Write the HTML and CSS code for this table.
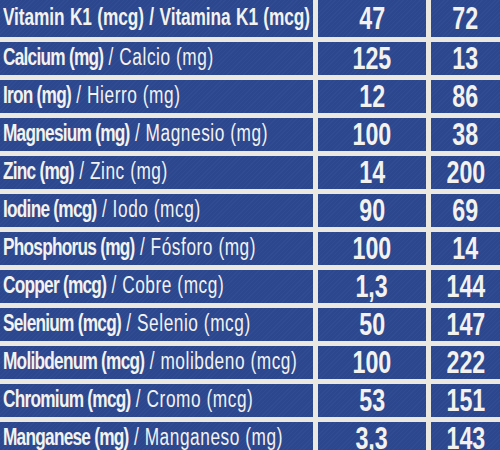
FILE: index.html
```html
<!DOCTYPE html>
<html>
<head>
<meta charset="utf-8">
<link rel="stylesheet" href="styles.css">
</head>
<body>
<div class="label">
  <div class="name"><span class="t t-bold"><b>Vitamin K1 (mcg)</b> / Vitamina K1 (mcg)</span></div><div class="v"><span class="n">47</span></div><div class="v"><span class="n">72</span></div>
  <div class="name"><span class="t"><b>Calcium (mg)</b> / Calcio (mg)</span></div><div class="v"><span class="n">125</span></div><div class="v"><span class="n">13</span></div>
  <div class="name"><span class="t"><b>Iron (mg)</b> / Hierro (mg)</span></div><div class="v"><span class="n">12</span></div><div class="v"><span class="n">86</span></div>
  <div class="name"><span class="t"><b>Magnesium (mg)</b> / Magnesio (mg)</span></div><div class="v"><span class="n">100</span></div><div class="v"><span class="n">38</span></div>
  <div class="name"><span class="t"><b>Zinc (mg)</b> / Zinc (mg)</span></div><div class="v"><span class="n">14</span></div><div class="v"><span class="n">200</span></div>
  <div class="name"><span class="t"><b>Iodine (mcg)</b> / Iodo (mcg)</span></div><div class="v"><span class="n">90</span></div><div class="v"><span class="n">69</span></div>
  <div class="name"><span class="t"><b>Phosphorus (mg)</b> / Fósforo (mg)</span></div><div class="v"><span class="n">100</span></div><div class="v"><span class="n">14</span></div>
  <div class="name"><span class="t"><b>Copper (mcg)</b> / Cobre (mcg)</span></div><div class="v"><span class="n">1,3</span></div><div class="v"><span class="n">144</span></div>
  <div class="name"><span class="t"><b>Selenium (mcg)</b> / Selenio (mcg)</span></div><div class="v"><span class="n">50</span></div><div class="v"><span class="n">147</span></div>
  <div class="name"><span class="t"><b>Molibdenum (mcg)</b> / molibdeno (mcg)</span></div><div class="v"><span class="n">100</span></div><div class="v"><span class="n">222</span></div>
  <div class="name"><span class="t"><b>Chromium (mcg)</b> / Cromo (mcg)</span></div><div class="v"><span class="n">53</span></div><div class="v"><span class="n">151</span></div>
  <div class="name"><span class="t"><b>Manganese (mg)</b> / Manganeso (mg)</span></div><div class="v"><span class="n">3,3</span></div><div class="v"><span class="n">143</span></div>
</div>
</body>
</html>
```

FILE: styles.css
```css
html, body {
  margin: 0;
  padding: 0;
  width: 500px;
  height: 450px;
  overflow: hidden;
  background: #2d4891;
}

.label {
  display: grid;
  grid-template-columns: 313px 108px 1fr;
  grid-template-rows: 37px repeat(11, 33px);
  column-gap: 5px;
  row-gap: 5px;
  background: #ebe8e1;
  width: 500px;
  font-family: "Liberation Sans", Arial, sans-serif;
  color: #f3f2ee;
}

.label > div {
  background-color: #2d4891;
  background-image: repeating-linear-gradient(135deg, rgba(255,255,255,0.018) 0 1px, rgba(0,0,0,0.02) 1px 3px);
  display: flex;
  align-items: center;
  overflow: hidden;
  white-space: nowrap;
  line-height: 1;
}

.name {
  padding-left: 3px;
}

.t {
  display: inline-block;
  font-size: 23px;
  font-weight: 400;
  letter-spacing: 0.75px;
  transform: scaleX(0.75);
  transform-origin: left center;
  margin-top: -2px;
}

.t b {
  font-weight: 700;
  letter-spacing: -1px;
}

.t-bold,
.t-bold b {
  font-weight: 700;
  letter-spacing: -0.1px;
  word-spacing: 1px;
}

.v {
  justify-content: center;
}

.n {
  display: inline-block;
  font-size: 31px;
  font-weight: 700;
  transform: scaleX(0.75);
  transform-origin: center;
  margin-top: -1px;
}
```
